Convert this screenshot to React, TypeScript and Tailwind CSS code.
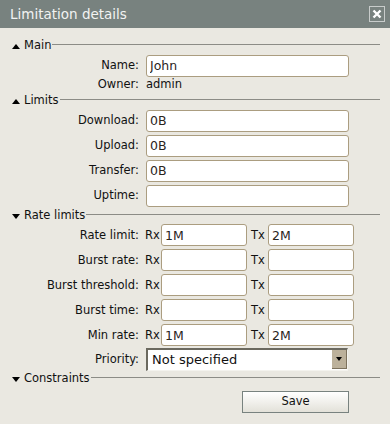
import React from "react";

const font = "font-['DejaVu_Sans',_'Liberation_Sans',_sans-serif]";

function Tri({ up }: { up: boolean }) {
  return (
    <svg width="8" height="5" viewBox="0 0 8 5" className="mr-[4px] shrink-0">
      {up ? (
        <path d="M0 5 L4 0 L8 5 Z" fill="#000" />
      ) : (
        <path d="M0 0 L8 0 L4 5 Z" fill="#000" />
      )}
    </svg>
  );
}

function SectionHeader({ label, up }: { label: string; up: boolean }) {
  return (
    <div className="flex h-[16px] items-center pl-[12px] pr-[10px]">
      <Tri up={up} />
      <span className="text-[11.5px] leading-none text-[#111]">{label}</span>
      <div className="ml-[1px] h-px flex-1 -translate-y-[2px] bg-[#8c8c86]" />
    </div>
  );
}

function TextBox({ value, width }: { value?: string; width: string }) {
  return (
    <input
      readOnly
      value={value ?? ""}
      className={`${width} h-[22px] rounded-[3px] border border-[#ab9d80] bg-white px-[3px] text-[12.5px] text-[#2a241c] outline-none`}
    />
  );
}

function FieldRow({ label, value }: { label: string; value?: string }) {
  return (
    <div className="flex h-[22px] items-center">
      <div className="w-[139px] pt-[2px] text-right text-[11.5px] text-[#111]">{label}</div>
      <div className="ml-[7px]">
        <TextBox value={value} width="w-[203px]" />
      </div>
    </div>
  );
}

function RateRow({ label, rx, tx }: { label: string; rx?: string; tx?: string }) {
  return (
    <div className="flex h-[22px] items-center text-[11.5px] text-[#111]">
      <div className="w-[139px] pt-[2px] text-right">{label}</div>
      <span className="w-[22px] pl-[6px] pt-[2px]">Rx</span>
      <TextBox value={rx} width="w-[86px]" />
      <span className="w-[21px] pl-[4px] pt-[2px]">Tx</span>
      <TextBox value={tx} width="w-[86px]" />
    </div>
  );
}

export default function App() {
  return (
    <div className={`${font} flex h-[424px] w-[390px] flex-col bg-[#eae8e1]`}>
      {/* Title bar */}
      <div className="flex h-[28px] shrink-0 items-center justify-between bg-[#78827f] pl-[10px] pr-[5px]">
        <span className="text-[13.5px] text-[#f2f3f2]">Limitation details</span>
        <div className="flex h-[16px] w-[16px] items-center justify-center border border-[#c8cccb]">
          <svg width="10" height="10" viewBox="0 0 10 10">
            <path d="M1.5 1.5 L8.5 8.5 M8.5 1.5 L1.5 8.5" stroke="#fff" strokeWidth="2.4" />
          </svg>
        </div>
      </div>

      <div className="flex flex-col pt-[10px]">
        {/* Main */}
        <SectionHeader label="Main" up />
        <FieldRow label="Name:" value="John" />
        <div className="mt-[1px] flex h-[16px] items-center text-[11.5px] text-[#111]">
          <div className="w-[139px] text-right">Owner:</div>
          <div className="ml-[7px]">admin</div>
        </div>

        {/* Limits */}
        <SectionHeader label="Limits" up />
        <div className="flex flex-col gap-[3px]">
          <FieldRow label="Download:" value="0B" />
          <FieldRow label="Upload:" value="0B" />
          <FieldRow label="Transfer:" value="0B" />
          <FieldRow label="Uptime:" />
        </div>

        {/* Rate limits */}
        <div className="mt-[2px]">
          <SectionHeader label="Rate limits" up={false} />
        </div>
        <div className="flex flex-col gap-[3px]">
          <RateRow label="Rate limit:" rx="1M" tx="2M" />
          <RateRow label="Burst rate:" />
          <RateRow label="Burst threshold:" />
          <RateRow label="Burst time:" />
          <RateRow label="Min rate:" rx="1M" tx="2M" />
        </div>
        <div className="mt-[2px] flex h-[22px] items-center">
          <div className="w-[139px] pt-[2px] text-right text-[11.5px] text-[#111]">Priority:</div>
          <div className="ml-[7px] flex h-[23px] w-[202px] items-center border-t-2 border-l-2 border-r border-b border-t-[#6b695f] border-l-[#6b695f] border-r-[#f4f3ee] border-b-[#f4f3ee] bg-white">
            <span className="flex-1 pl-[4px] text-[13px] text-[#111]">Not specified</span>
            <div className="flex h-[19px] w-[15px] items-center justify-center border-r border-b border-r-[#7d725d] border-b-[#7d725d] bg-[#bcb19b]">
              <svg width="6" height="4" viewBox="0 0 6 4">
                <path d="M0 0 L6 0 L3 4 Z" fill="#000" />
              </svg>
            </div>
          </div>
        </div>

        {/* Constraints */}
        <div className="mt-[1px]">
          <SectionHeader label="Constraints" up={false} />
        </div>

        <div className="mt-[4px] flex pl-[242px]">
          <button className="h-[22px] w-[107px] border border-[#78827f] bg-linear-to-b from-white to-[#e3e1d9] text-[11.5px] text-[#111]">
            Save
          </button>
        </div>
      </div>
    </div>
  );
}
